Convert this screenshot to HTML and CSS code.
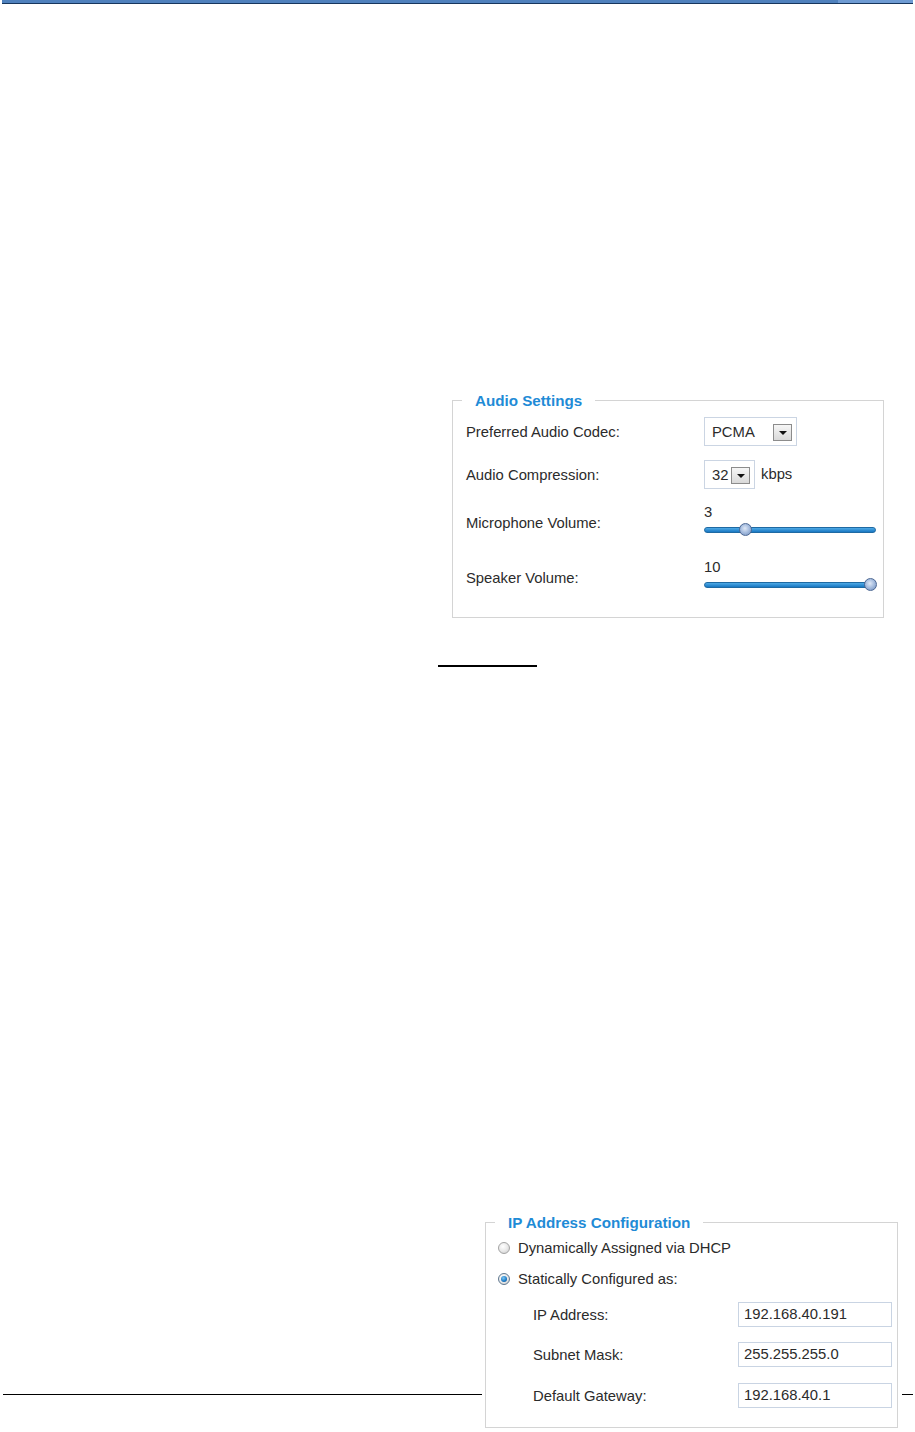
FILE: index.html
```html
<!DOCTYPE html>
<html lang="en">
<head>
    <meta charset="UTF-8">
    <title>Audio and IP settings</title>

    <link rel="stylesheet" href="styles.css">

</head>
<body>
<div class="page">
    <div class="header_bar"></div>

    <!-- screenshot 1: audio -->
    <div class="audio_shot">
        <fieldset class="panel">
            <legend>Audio Settings</legend>
            <div class="panel_body audio_body">
                <div class="row row_codec">
                    <span class="label">Preferred Audio Codec:</span>
                    <div class="select select_codec"><span>PCMA</span><span class="drop"></span></div>
                </div>
                <div class="row row_compress">
                    <span class="label">Audio Compression:</span>
                    <div class="select select_rate"><span>32</span><span class="drop"></span></div>
                    <span class="unit">kbps</span>
                </div>
                <div class="row row_mic">
                    <span class="label">Microphone Volume:</span>
                    <div class="slider">
                        <div class="slider_value">3</div>
                        <div class="slider_area">
                            <div class="track"></div>
                            <div class="rail"><span class="thumb" style="left: 22.2%"></span></div>
                        </div>
                    </div>
                </div>
                <div class="row row_speaker">
                    <span class="label">Speaker Volume:</span>
                    <div class="slider">
                        <div class="slider_value">10</div>
                        <div class="slider_area">
                            <div class="track"></div>
                            <div class="rail"><span class="thumb" style="left: 100%"></span></div>
                        </div>
                    </div>
                </div>
            </div>
        </fieldset>
    </div>

    <div class="link_line"></div>

    <!-- screenshot 2: ip address -->
    <div class="ip_shot">
        <fieldset class="panel">
            <legend>IP Address Configuration</legend>
            <div class="panel_body ip_body">
                <div class="radio_row radio_dhcp">
                    <span class="radio"></span>
                    <span>Dynamically Assigned via DHCP</span>
                </div>
                <div class="radio_row radio_static">
                    <span class="radio checked"></span>
                    <span>Statically Configured as:</span>
                </div>
                <div class="ip_row ip_first">
                    <span class="ip_label">IP Address:</span>
                    <div class="text_input">192.168.40.191</div>
                </div>
                <div class="ip_row">
                    <span class="ip_label">Subnet Mask:</span>
                    <div class="text_input">255.255.255.0</div>
                </div>
                <div class="ip_row">
                    <span class="ip_label">Default Gateway:</span>
                    <div class="text_input">192.168.40.1</div>
                </div>
            </div>
        </fieldset>
    </div>

    <div class="footer_rule"></div>
</div>
</body>
</html>
```

FILE: styles.css
```css
body {
    margin: 0;
    background-color: #fff;
    font-family: "Liberation Sans", Arial, sans-serif;
    color: #2b2b2b;
}

.page {
    width: 915px;
    height: 1432px;
    overflow: hidden;
}

.header_bar {
    width: 911px;
    height: 3px;
    margin-left: 2px;
    background: linear-gradient(to right, #4f81bd 0, #4f81bd 836px, #6e9bd3 836px);
    border-bottom: 1px solid #17365d;
}

/* shared panel look */
.panel {
    margin: 0;
    padding: 0;
    border: 1px solid #d4d4d4;
    box-sizing: border-box;
    min-width: 0;
}

.panel legend {
    margin-left: 9px;
    padding: 0 13px;
    font-size: 15.2px;
    line-height: 17px;
    font-weight: bold;
    color: #1f8bd6;
}

.label,
.unit,
.slider_value,
.radio_row,
.ip_label,
.text_input,
.select span {
    font-size: 14.8px;
}

/* audio */
.audio_shot {
    margin: 388px 0 0 452px;
    width: 432px;
}

.audio_body {
    padding: 8px 0 22px 13px;
}

.row {
    display: flex;
    align-items: center;
}

.row .label {
    width: 238px;
    flex: none;
}

.row_compress {
    margin-top: 14px;
}

.row_mic {
    margin-top: 15px;
}

.row_mic .label,
.row_speaker .label {
    margin-top: 2px;
}

.row_speaker {
    margin-top: 19px;
}

.select {
    height: 29px;
    border: 1px solid #cbd5e3;
    box-sizing: border-box;
    display: flex;
    align-items: center;
    padding-left: 7px;
    position: relative;
}

.select_codec {
    width: 93px;
}

.select_rate {
    width: 51px;
}

.drop {
    position: absolute;
    right: 4px;
    top: 6px;
    width: 19px;
    height: 17px;
    box-sizing: border-box;
    border: 1px solid #8c8c8c;
    background: linear-gradient(#f6f6f6, #d9d9d9);
}

.drop:after {
    content: "";
    position: absolute;
    left: 5px;
    top: 6px;
    border-left: 4px solid transparent;
    border-right: 4px solid transparent;
    border-top: 4px solid #111;
}

.unit {
    margin-left: 6px;
    margin-top: -2px;
}

.slider {
    width: 172px;
}

.slider_value {
    line-height: 16px;
}

.slider_area {
    height: 20px;
    position: relative;
}

.track {
    position: absolute;
    left: 0;
    right: 0;
    top: 7px;
    height: 6px;
    box-sizing: border-box;
    border: 1px solid #1f6aa3;
    border-radius: 3px;
    background: linear-gradient(#4eaae6, #1877c2);
}

.rail {
    position: absolute;
    left: 6px;
    right: 6px;
    top: 0;
    bottom: 0;
}

.thumb {
    position: absolute;
    top: 3px;
    width: 13px;
    height: 13px;
    margin-left: -6.5px;
    box-sizing: border-box;
    border: 1px solid #4d6894;
    border-radius: 50%;
    background: radial-gradient(circle at 45% 40%, #dfe8f6 0, #a9bfe0 45%, #6f8dbd 100%);
}

.link_line {
    margin: 47px 0 0 438px;
    width: 99px;
    height: 2px;
    background-color: #000;
}

/* ip address */
.ip_shot {
    margin: 547px 0 0 482px;
    width: 420px;
    padding-left: 3px;
    box-sizing: border-box;
    background-color: #fff;
    position: relative;
    z-index: 1;
}

.ip_shot .panel {
    width: 413px;
}

.ip_body {
    padding: 7px 0 19px 12px;
}

.radio_row {
    display: flex;
    align-items: center;
    height: 20px;
}

.radio_static {
    margin-top: 11px;
}

.radio {
    width: 12px;
    height: 12px;
    margin-right: 8px;
    box-sizing: border-box;
    border: 1px solid #a3a3a3;
    border-radius: 50%;
    background: radial-gradient(circle at 40% 35%, #fff 0, #e9e9e9 50%, #c9c9c9 100%);
    position: relative;
}

.radio.checked {
    border-color: #5f7890;
}

.radio.checked:after {
    content: "";
    position: absolute;
    left: 2px;
    top: 2px;
    width: 6px;
    height: 6px;
    border-radius: 50%;
    background: radial-gradient(circle at 40% 35%, #7cc6f2 0, #1a78c4 60%, #0b3f78 100%);
}

.ip_row {
    display: flex;
    align-items: center;
    margin-top: 15px;
    padding-left: 35px;
}

.ip_first {
    margin-top: 13px;
}

.ip_row:last-child {
    margin-top: 16px;
}

.ip_label {
    width: 205px;
    flex: none;
}

.text_input {
    width: 154px;
    height: 25px;
    box-sizing: border-box;
    border: 1px solid #c9d4e3;
    padding-left: 5px;
    line-height: 23px;
}

.footer_rule {
    margin: -34px 0 0 3px;
    width: 910px;
    height: 1px;
    background-color: #000;
}
```
